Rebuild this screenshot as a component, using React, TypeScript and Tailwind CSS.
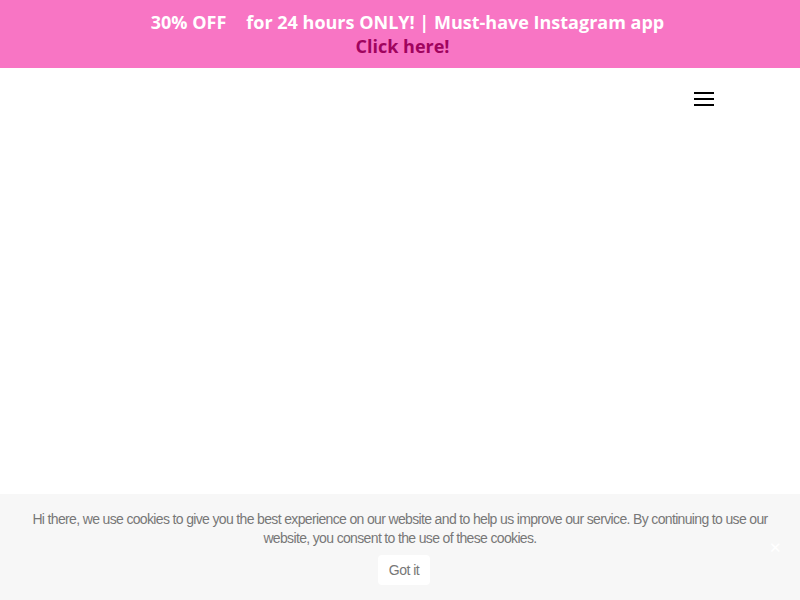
import React from "react";

export default function App() {
  return (
    <div className="relative w-[800px] h-[600px] bg-white overflow-hidden">
      <div
        className="h-[68px] bg-[#f875c4] flex flex-col items-center pt-[10px] text-[18px] leading-[24px] font-bold text-white"
        style={{ fontFamily: '"Open Sans", sans-serif' }}
      >
        <div className="ml-[15px]">
          30% OFF<span className="inline-block w-[20px]"></span>for 24 hours ONLY! | Must-have Instagram app
        </div>
        <div className="ml-[5px] text-[#a0045e]">Click here!</div>
      </div>
      <div className="h-[62px] flex justify-end items-center pr-[86px]">
        <div className="flex flex-col gap-[4px] w-[20px]">
          <div className="h-[2px] bg-black"></div>
          <div className="h-[2px] bg-black"></div>
          <div className="h-[2px] bg-black"></div>
        </div>
      </div>
      <div
        className="absolute left-0 right-0 top-[494px] h-[106px] bg-[#f7f7f7] flex flex-col items-center pt-[16px] px-[24px] text-[#777] text-[14px] leading-[19px] tracking-[-0.65px]"
        style={{ fontFamily: '"Liberation Sans", Arial, sans-serif' }}
      >
        <p className="text-center">
          Hi there, we use cookies to give you the best experience on our website and to help us improve our service. By continuing to use our website, you consent to the use of these cookies.
        </p>
        <button className="mt-[7px] ml-[8px] h-[30px] px-[11px] bg-white rounded-[4px] text-[#777] text-[14px] tracking-[-0.5px]">
          Got it
        </button>
        <span className="absolute right-[19px] top-[46px] text-white text-[15px] leading-none">✕</span>
      </div>
    </div>
  );
}
